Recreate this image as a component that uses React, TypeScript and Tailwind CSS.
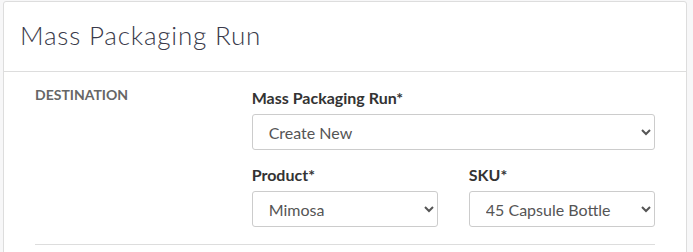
import { useState } from 'react';

const Field = ({ label, value, options }: { label: string; value: string; options: string[] }) => {
  const [v, setV] = useState(value);
  return (
    <div className="flex flex-col">
      <label className="mb-[6px] text-[16px] font-bold leading-[20px] text-[#333]">{label}</label>
      <select
        value={v}
        onChange={(e) => setV(e.target.value)}
        className="h-[36px] w-full rounded-[3px] border border-[#ccc] bg-white pl-[12px] pr-[8px] text-[16px] text-[#555] outline-none"
      >
        {options.map((o) => (
          <option key={o}>{o}</option>
        ))}
      </select>
    </div>
  );
};

const App = () => {
  return (
    <div className="h-[252px] w-[693px] overflow-hidden bg-[#f7f7f8] pl-[3px] pt-[1px] pr-[6px] font-['Lato',sans-serif]">
      <div className="h-[260px] rounded-t-[3px] border border-[#ddd] bg-white">
        <div className="h-[70px] border-b border-[#ddd] px-[16px] pt-[18px]">
          <h1 className="text-[26px] font-light leading-[30px] tracking-[0.8px] text-[#3a3a4a]">Mass Packaging Run</h1>
        </div>
        <div className="flex px-[31px]">
          <div className="w-[217px] pt-[14px] text-[14px] font-bold leading-[17px] text-[#666]">DESTINATION</div>
          <div className="flex w-[404px] flex-col gap-[15px] border-b border-[#ddd] pt-[16px] pb-[17px] -ml-[217px] pl-[217px] box-content">
            <Field label="Mass Packaging Run*" value="Create New" options={['Create New']} />
            <div className="grid grid-cols-2 gap-[31px]">
              <Field label="Product*" value="Mimosa" options={['Mimosa']} />
              <Field label="SKU*" value="45 Capsule Bottle" options={['45 Capsule Bottle']} />
            </div>
          </div>
        </div>
      </div>
    </div>
  );
};

export default App;
